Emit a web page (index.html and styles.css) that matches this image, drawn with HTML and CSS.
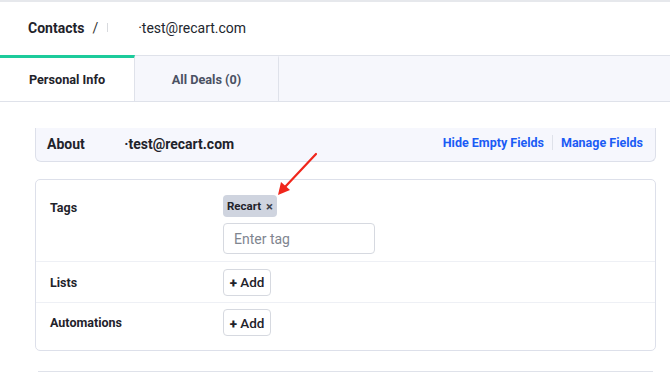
FILE: index.html
```html
<!DOCTYPE html>
<html>
	<head>
		<title>Contacts</title>
		<link rel="stylesheet" href="styles.css">
	</head>
	<body>
		<header class="topbar">
			<span class="crumb">Contacts</span>
			<span class="slash">/</span>
			<span class="tick"></span>
			<span class="email">·test@recart.com</span>
		</header>

		<nav class="tabs">
			<div class="tab active">Personal Info</div>
			<div class="tab">All Deals (0)</div>
		</nav>

		<main class="content">
			<div class="about">
				<div class="about-title">
					<span class="about-label">About</span>
					<span class="about-email">·test@recart.com</span>
				</div>
				<div class="about-links">
					<a href="#">Hide Empty Fields</a>
					<span class="sep"></span>
					<a href="#">Manage Fields</a>
				</div>
			</div>

			<div class="fields">
				<div class="row row-tags">
					<div class="label">Tags</div>
					<div class="value">
						<span class="chip">Recart <span class="chip-x">×</span></span>
						<input type="text" class="tag-input" placeholder="Enter tag" />
					</div>
				</div>
				<div class="row">
					<div class="label">Lists</div>
					<div class="value"><button class="add"><b>+</b> Add</button></div>
				</div>
				<div class="row row-last">
					<div class="label">Automations</div>
					<div class="value"><button class="add"><b>+</b> Add</button></div>
				</div>
			</div>

			<div class="next-card"></div>
		</main>

		<!-- annotation arrow -->
		<svg class="arrow" width="60" height="60" viewBox="0 0 60 60">
			<line x1="51" y1="2" x2="20" y2="35" stroke="#f0261b" stroke-width="2.2" stroke-linecap="round" />
			<polygon points="13,43 16,30 25,38" fill="#f0261b" />
		</svg>
	</body>
</html>
```

FILE: styles.css
```css
body {
	margin: 0;
	font-family: Roboto, "Noto Sans", sans-serif;
	color: #1f232b;
	background: #fff;
}
.topbar {
	display: flex;
	align-items: center;
	height: 51px;
	padding-bottom: 2px;
	border-top: 2px solid #e6e8ec;
	padding-left: 28px;
	font-size: 14px;
}
.crumb {
	font-weight: 700;
}
.slash {
	margin-left: 8px;
	color: #333;
}
.tick {
	width: 1px;
	height: 9px;
	background: #d8dade;
	margin-left: 9px;
	margin-right: 30px;
}
.email {
	color: #22262e;
}
.tabs {
	display: flex;
	height: 45px;
	background: #f6f7fc;
	border-top: 1px solid #dfe2ea;
	border-bottom: 1px solid #dfe2ea;
}
.tab {
	display: flex;
	align-items: center;
	justify-content: center;
	width: 143px;
	font-size: 12.7px;
	font-weight: 700;
	color: #4a5163;
	border-right: 1px solid #dfe2ea;
	border-top: 3px solid transparent;
	margin-top: -1px;
}
.tab.active {
	width: 134px;
	background: #fff;
	color: #1f232b;
	border-top-color: #1ccb9b;
}
.content {
	margin: 0 14px 0 35px;
	padding-top: 26px;
}
.about {
	display: flex;
	align-items: center;
	justify-content: space-between;
	height: 33px;
	padding: 0 11px 0 11px;
	background: #f6f7fd;
	border: 1px solid #dde0ea;
	border-top: none;
	border-radius: 0 0 6px 6px;
}
.about-title {
	font-size: 14px;
	font-weight: 700;
	margin-top: -1px;
}
.about-email {
	margin-left: 36px;
}
.about-links {
	display: flex;
	align-items: center;
	margin-top: -5px;
	margin-right: 1px;
}
.about-links a {
	color: #1c5cf5;
	font-size: 12.5px;
	font-weight: 700;
	text-decoration: none;
}
.sep {
	width: 1px;
	height: 15px;
	background: #dfe2ea;
	margin: 0 8px;
}
.fields {
	margin-top: 17px;
	border: 1px solid #dde0ea;
	border-radius: 5px;
}
.row {
	display: flex;
	align-items: center;
	height: 40px;
	border-top: 1px solid #eef0f5;
}
.row-tags {
	height: 81px;
	align-items: flex-start;
	border-top: none;
}
.row-tags .label {
	margin-top: 20px;
}
.row-tags .value {
	margin-top: 15px;
}
.row-last {
	height: 47px;
	align-items: flex-start;
}
.row-last .label {
	margin-top: 12px;
}
.row-last .value {
	margin-top: 6px;
}
.label {
	width: 173px;
	padding-left: 14px;
	font-size: 12.5px;
	font-weight: 700;
}
.value {
	display: flex;
	flex-direction: column;
	align-items: flex-start;
}
.chip {
	display: inline-flex;
	align-items: center;
	height: 22px;
	padding: 0 4px 0 4px;
	background: #cfd4df;
	border-radius: 4px;
	font-size: 11.5px;
	font-weight: 700;
}
.chip-x {
	margin-left: 5px;
	font-size: 13px;
	color: #3b404a;
}
.tag-input {
	box-sizing: border-box;
	width: 152px;
	height: 31px;
	margin-top: 6px;
	padding: 0 10px;
	border: 1px solid #d6d9e0;
	border-radius: 4px;
	font-family: inherit;
	font-size: 14px;
}
.tag-input::placeholder {
	color: #80858f;
}
.add {
	box-sizing: border-box;
	height: 27px;
	width: 48px;
	padding: 0;
	background: #fff;
	border: 1px solid #d6d9e0;
	border-radius: 4px;
	font-family: inherit;
	font-size: 13.5px;
	font-weight: 500;
	color: #1f232b;
}
.add b {
	font-weight: 900;
}
.next-card {
	margin: 20px 3px 0 3px;
	height: 10px;
	border-top: 1px solid #dfe2ea;
}
.arrow {
	position: absolute;
	left: 265px;
	top: 152px;
}
```
